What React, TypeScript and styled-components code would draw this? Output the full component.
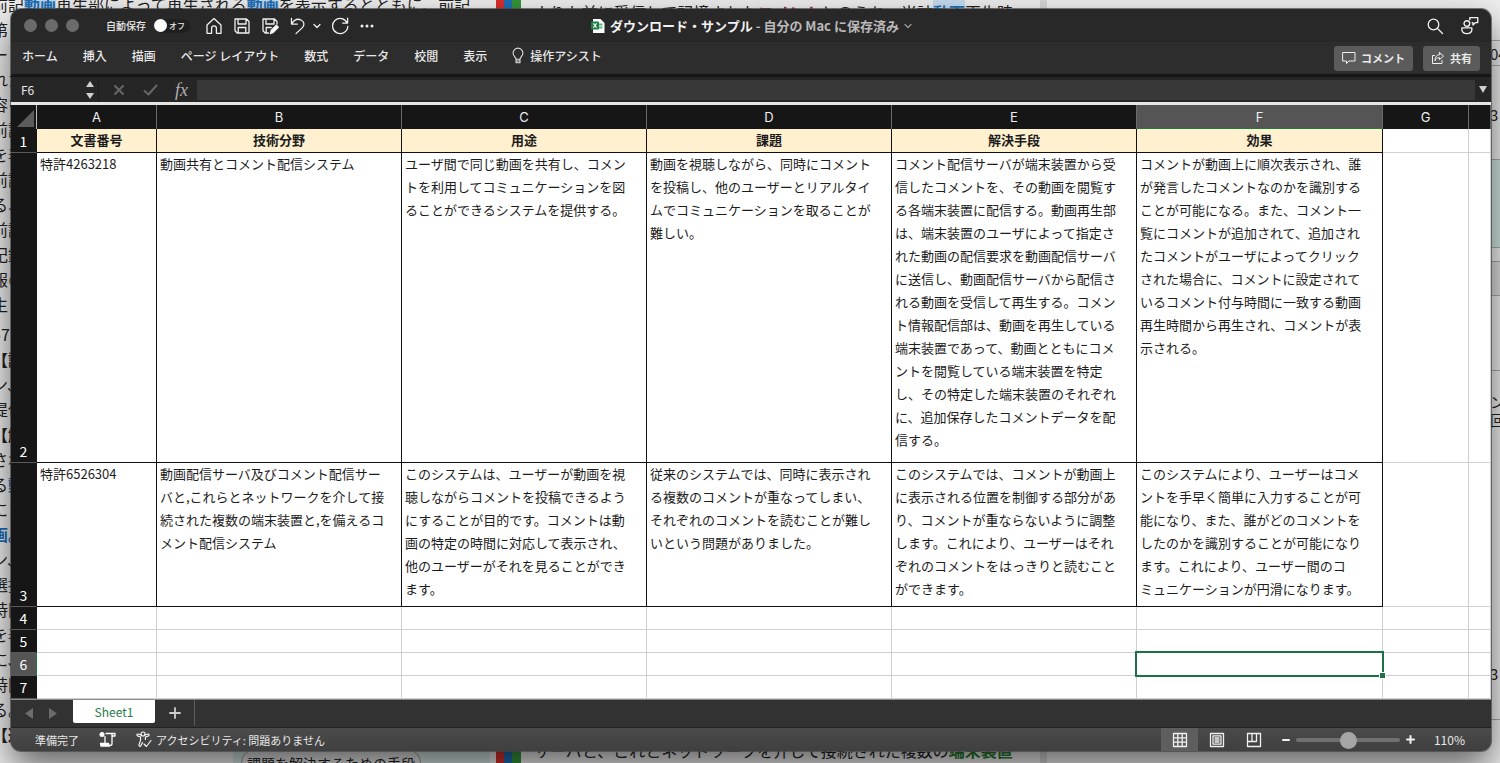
import React, { useState } from "react";
import styled, { createGlobalStyle, css } from "styled-components";

const GlobalStyle = createGlobalStyle`
  *, *::before, *::after { box-sizing: border-box; }
  body {
    margin: 0;
    background: #e9e9e9;
    font-family: "Noto Sans CJK JP", "Liberation Sans", sans-serif;
    font-size: 12px;
  }
  button, input { font: inherit; color: inherit; border: 0; padding: 0; margin: 0; background: none; }
  button { cursor: pointer; }
`;

/* ---------- desktop behind the window ---------- */

const Desktop = styled.div`
  position: relative;
  min-height: 100vh;
  padding: 9px 9px 12px 11px;
  overflow: hidden;
`;

const Backdrop = styled.div`
  position: absolute;
  inset: 0;
  display: grid;
  grid-template-columns: 496px 25px 519px 7px 1fr 10px;
  overflow: hidden;
  color: #222;
  font-size: 16px;
  line-height: 25px;
  white-space: nowrap;
`;

const Pane = styled.div`
  display: flex;
  flex-direction: column;
  justify-content: space-between;
  overflow: hidden;
  min-height: 0;
  background: #efefef;
`;

const DocLines = styled.div`
  margin: -8px 0 0 -8px;
`;

const DocLine = styled.div<{ $gap?: boolean; $bold?: boolean }>`
  height: 25px;
  margin-top: ${(p) => (p.$gap ? 5 : 0)}px;
  font-weight: ${(p) => (p.$bold ? 700 : 400)};
`;

const Mark = styled.span<{ $tone: string; $bg?: string }>`
  color: ${(p) => p.$tone};
  background: ${(p) => p.$bg ?? "transparent"};
  font-weight: 700;
`;

const Hint = styled.div`
  position: absolute;
  left: 233px;
  bottom: 0;
  width: 257px;
  height: 24px;
  padding: 10px 8px 0;
  background: #d3e6e2;
  overflow: hidden;
`;

const HintPill = styled.div`
  width: 180px;
  height: 28px;
  border: 1px solid #999;
  border-radius: 14px;
  background: #e4e4e4;
  text-align: center;
  font-size: 14px;
  line-height: 26px;
`;

const Stripes = styled.div`
  background: linear-gradient(90deg, #d9302c 0 8px, #1f6fb5 8px 16px, #35963c 16px);
`;

const CentreText = styled.p`
  margin: 0;
  padding: 0 0 0 13px;
`;

const Divider = styled.div`
  background: #d6d6d6;
`;

const Edge = styled.div`
  overflow: hidden;
  background: #efefef;
  font-size: 15px;
  line-height: 18px;
`;

const EdgeBlock = styled.div<{ $h: number; $bg?: string; $plain?: boolean }>`
  height: ${(p) => p.$h}px;
  padding-top: 4px;
  border-bottom: ${(p) => (p.$plain ? "0" : "1px solid #aaa")};
  background: ${(p) => p.$bg ?? "transparent"};
`;

/* ---------- window chrome ---------- */

const Window = styled.main`
  position: relative;
  border-radius: 10px;
  overflow: hidden;
  color: #e8e8e8;
  background: #2d2d2d;
`;

const WindowShadow = styled.div`
  position: relative;
  border-radius: 10px;
  box-shadow: 0 0 0 1px rgba(70, 70, 70, 0.7), 0 16px 36px rgba(0, 0, 0, 0.6);
`;

const TitleBar = styled.header`
  display: grid;
  grid-template-columns: 1fr auto 1fr;
  align-items: center;
  height: 33px;
  padding: 0 12px 0 13px;
  background: #282828;
`;

const TitleLeft = styled.div`
  display: flex;
  align-items: center;
`;

const Lights = styled.div`
  display: flex;
  gap: 8px;
  margin-right: 27px;
`;

const Light = styled.button`
  width: 13px;
  height: 13px;
  border-radius: 50%;
  background: #6b6b6b;
`;

const AutoSave = styled.label`
  display: flex;
  align-items: center;
  gap: 8px;
  width: 99px;
  font-size: 10px;
  font-weight: 500;
`;

const Switch = styled.span`
  position: relative;
  display: flex;
  align-items: center;
  width: 36px;
  height: 14px;
  padding-left: 15px;
  border-radius: 7px;
  background: #1f1f1f;
  font-size: 8px;
  line-height: 14px;
`;

const SwitchInput = styled.input`
  appearance: none;
  position: absolute;
  left: 0;
  top: 0;
  width: 13px;
  height: 13px;
  border-radius: 50%;
  background: #fff;
`;

const Tools = styled.div`
  display: flex;
  align-items: center;
  gap: 10px;
`;

const UndoGroup = styled.div`
  display: flex;
  align-items: center;
  gap: 6px;
`;

const IconButton = styled.button`
  display: inline-flex;
  align-items: center;
  justify-content: center;
  flex: none;
`;

const Title = styled.h1`
  display: flex;
  align-items: center;
  gap: 5px;
  margin: 0;
  font-size: 13px;
  line-height: 20px;
  font-weight: 700;
  color: #f2f2f2;
`;

const Saved = styled.span`
  color: #b9b9b9;
`;

const TitleRight = styled.div`
  display: flex;
  justify-content: flex-end;
  gap: 16px;
`;

const Ribbon = styled.nav`
  display: flex;
  align-items: center;
  height: 32px;
  padding: 0 11px 0 11px;
  background: #2d2d2d;
`;

const RibbonTabs = styled.div`
  display: flex;
  align-items: center;
  gap: 25px;
  flex: 1;
  padding-bottom: 4px;
`;

const RibbonTab = styled.button`
  display: inline-flex;
  align-items: center;
  gap: 6px;
  font-weight: 500;
  white-space: nowrap;
  line-height: 20px;
`;

const Action = styled.button`
  display: inline-flex;
  align-items: center;
  justify-content: center;
  gap: 5px;
  height: 25px;
  padding: 0 8px;
  margin-left: 10px;
  border-radius: 3px;
  background: #5b5b5b;
  font-size: 11px;
  font-weight: 700;
`;

const FormulaBar = styled.div`
  display: flex;
  align-items: center;
  height: 31px;
  border-top: 3px solid #161616;
  border-bottom: 3px solid #e6e6e6;
  background: #262626;
`;

const NameBox = styled.input`
  width: 70px;
  padding-left: 10px;
`;

const Spinner = styled.button`
  display: flex;
  width: 18px;
  height: 22px;
  align-items: center;
  justify-content: center;
  border-right: 1px solid #1c1c1c;
`;

const FormulaTools = styled.div`
  display: flex;
  align-items: center;
  justify-content: space-between;
  width: 98px;
  padding: 0 9px 0 14px;
`;

const Fx = styled.span`
  font: italic 18px/20px "Liberation Serif", serif;
  color: #b0b0b0;
`;

const FormulaInput = styled.input`
  flex: 1;
  min-width: 0;
  height: 20px;
  background: #383838;
`;

const Expand = styled(IconButton)`
  width: 16px;
`;

/* ---------- sheet ---------- */

const Sheet = styled.table`
  width: 100%;
  table-layout: fixed;
  border-collapse: separate;
  border-spacing: 0;
  background: #fff;
  color: #1c1c1c;
  font-size: 13px;
  line-height: 23px;
`;

const Col = styled.col<{ $w?: number }>`
  width: ${(p) => (p.$w ? `${p.$w}px` : "auto")};
`;

const HeadCell = styled.th<{ $active?: boolean }>`
  height: 24px;
  padding: 0;
  border-right: 1px solid #6a6a6a;
  background: #161616;
  color: #eee;
  font-family: "Inter", "Noto Sans CJK JP", sans-serif;
  font-weight: 400;
  line-height: 22px;
  ${(p) =>
    p.$active &&
    css`
      background: #555;
      box-shadow: inset 0 -1px #1d7a40;
    `}
`;

const Corner = styled.td`
  padding: 0 2px 2px 0;
  background: #161616;
  border-right: 1px solid #bbb;
  line-height: 0;
  text-align: right;
  vertical-align: bottom;
`;

const RowHead = styled.th<{ $active?: boolean }>`
  padding: 0;
  background: ${(p) => (p.$active ? "#555" : "#161616")};
  border-right: 1px solid ${(p) => (p.$active ? "#1d7a40" : "#161616")};
  border-bottom: 1px solid #5a5a5a;
  color: #fff;
  font-size: 14px;
  font-weight: 400;
  line-height: 22px;
  vertical-align: bottom;
`;

const Row = styled.tr<{ $h: number }>`
  height: ${(p) => p.$h}px;
`;

const Cell = styled.td<{ $kind: "title" | "data" | "empty" }>`
  position: relative;
  padding: 0 0 0 3px;
  vertical-align: top;
  white-space: pre;
  border-right: 1px solid #d0d0d0;
  border-bottom: 1px solid #d0d0d0;
  ${(p) =>
    p.$kind !== "empty" &&
    css`
      border-color: #111;
    `}
  ${(p) =>
    p.$kind === "title" &&
    css`
      padding: 0;
      background: #fff0cf;
      font-weight: 700;
      text-align: center;
    `}
`;

const CellText = styled.div`
  margin-top: -1px;
`;

const Selection = styled.div`
  position: absolute;
  inset: -2px;
  z-index: 1;
  border: 2px solid #1e7145;
  &::after {
    content: "";
    position: absolute;
    right: -4px;
    bottom: -4px;
    width: 7px;
    height: 7px;
    border: 1px solid #fff;
    background: #1e7145;
  }
`;

/* ---------- bottom bars ---------- */

const TabBar = styled.div`
  display: flex;
  align-items: flex-start;
  height: 29px;
  padding-left: 14px;
  border-top: 1px solid #8a8a8a;
  border-bottom: 1px solid #222;
  background: #323232;
`;

const TabArrows = styled.div`
  display: flex;
  gap: 16px;
  width: 48px;
  height: 27px;
  align-items: center;
`;

const SheetTab = styled.button`
  width: 82px;
  height: 23px;
  border-radius: 0 0 2px 2px;
  background: #fff;
  color: #1f7a4a;
  line-height: 23px;
`;

const AddTab = styled(IconButton)`
  width: 40px;
  height: 26px;
  border-right: 1px solid #5c5c5c;
`;

const StatusBar = styled.footer`
  display: flex;
  align-items: center;
  height: 23px;
  padding: 0 26px 0 24px;
  background: linear-gradient(#4b4b4b, #3f3f3f);
  font-size: 11px;
  line-height: 20px;
  white-space: nowrap;
`;

const StatusLeft = styled.div`
  display: flex;
  align-items: center;
  gap: 20px;
  flex: 1;
`;

const AccessButton = styled.button`
  display: inline-flex;
  align-items: center;
  gap: 4px;
`;

const ViewButton = styled(IconButton)<{ $on?: boolean }>`
  width: 37px;
  height: 23px;
  background: ${(p) => (p.$on ? "#5e5e5e" : "transparent")};
`;

const Zoom = styled.div`
  display: flex;
  align-items: center;
  gap: 6px;
  margin-left: 10px;
`;

const Slider = styled.input`
  appearance: none;
  width: 104px;
  height: 17px;
  &::-webkit-slider-runnable-track {
    height: 4px;
    border-radius: 2px;
    background: #707070;
  }
  &::-webkit-slider-thumb {
    appearance: none;
    width: 17px;
    height: 17px;
    margin-top: -6px;
    border-radius: 50%;
    background: #a5a5a5;
  }
`;

const Percent = styled.output`
  width: 44px;
  text-align: right;
  font-size: 12px;
`;

/* ---------- icons ---------- */

type IconProps = { w?: number; h?: number; box: string; color?: string; sw?: number; children: React.ReactNode };
const Icon = ({ w = 18, h = 18, box, color = "#f0f0f0", sw = 1.3, children }: IconProps) => (
  <svg width={w} height={h} viewBox={box} fill="none" stroke={color} strokeWidth={sw} strokeLinejoin="round" strokeLinecap="round" aria-hidden="true">
    {children}
  </svg>
);

const HomeIcon = () => (
  <Icon box="0 0 18 18">
    <path d="M2 8 9 1.6 16 8v8.3h-4.6v-5.1a2.4 2.4 0 0 0-4.8 0v5.1H2z" />
  </Icon>
);
const SaveIcon = () => (
  <Icon box="0 0 18 18">
    <path d="M2 2h11.5L16 4.5V16H4.2L2 13.8zM5 2v5h8V2M5.2 16v-5.5h7.6V16" />
  </Icon>
);
const SaveEditIcon = () => (
  <Icon box="0 0 18 18">
    <path d="M7.5 16H4.2L2 13.8V2h11.5L16 4.5V7M5 2v5h8V2M5.2 16v-5.5h5" />
    <path d="m9.3 16.6 1-3.3 5-5 2 2-5 5z" fill="#fff" />
  </Icon>
);
const UndoIcon = () => (
  <Icon box="0 0 18 18">
    <path d="M2.5 1.5v5.6h5.8M2.8 6.8C5 3.2 8.6 1.4 12 3c3.5 1.7 3.6 5.2 1.4 7.6L7 16.6" />
  </Icon>
);
const RedoIcon = () => (
  <Icon box="0 0 18 18">
    <path d="M16.6 1.2v4.9h-5M16.2 6A7.6 7.6 0 1 0 16.8 9.5" />
  </Icon>
);
const DownIcon = ({ color = "#eee" }: { color?: string }) => (
  <Icon w={8} h={6} box="0 0 8 6" color={color}>
    <path d="m1 1.5 3 3 3-3" />
  </Icon>
);
const MoreIcon = () => (
  <Icon w={16} box="0 0 16 18">
    <g fill="#f0f0f0" stroke="none">
      <circle cx="3" cy="9" r="1.5" />
      <circle cx="8" cy="9" r="1.5" />
      <circle cx="13" cy="9" r="1.5" />
    </g>
  </Icon>
);
const ExcelFile = () => (
  <svg width="14" height="16" viewBox="0 0 14 16" aria-hidden="true">
    <path d="M2 1h7.500L13.500 5v10H2z" fill="#fff" />
    <path d="M8 5.500h3.500v2H8zM8 8.500h3.500v2H8z" fill="#5ab67f" />
    <rect x="0" y="3.5" width="8" height="8" rx="0.8" fill="#1e7f48" />
    <path d="m2.4 5.4 3.2 4.2M5.6 5.4 2.4 9.6" stroke="#fff" strokeWidth="1.1" />
  </svg>
);
const SearchIcon = () => (
  <Icon box="0 0 18 18">
    <circle cx="7.5" cy="7.5" r="5.3" />
    <path d="m11.5 11.5 5 5" />
  </Icon>
);
const PersonIcon = () => (
  <Icon box="0 0 18 18" w={19} h={19}>
    <circle cx="6.5" cy="7.2" r="2.7" />
    <path d="M1.800 11.300h9.400v1.800c0 2.200-2 3.600-4.700 3.600s-4.700-1.400-4.700-3.600zM9.300 3.500v-2h7.500v4.800h-2.300l-2.200 2.200V6.300h-.8" />
  </Icon>
);
const BulbIcon = () => (
  <Icon w={12} h={18} box="0 0 12 18" sw={1.1} color="#ddd">
    <path d="M4 12.3c0-2-2.9-3-2.9-6.3a4.9 4.9 0 0 1 9.8 0c0 3.300-2.900 4.300-2.900 6.300zM4 12.300v3.500h4v-3.500M4 14h4" />
  </Icon>
);
const CommentIcon = () => (
  <Icon w={14} h={14} box="0 0 14 14" sw={1}>
    <path d="M1 1.500h12v8.500H6.800L4.500 12.600V10H1z" />
  </Icon>
);
const ShareIcon = () => (
  <Icon w={14} h={14} box="0 0 14 14" sw={1}>
    <path d="M3.500 4.500H1.500v8h9.500V9.500M8.500 1.500l4 3.600-4 3.600V6.700C6 6.600 4.700 7.800 4 9.800c0-3.700 1.600-6 4.500-6.200z" />
  </Icon>
);
const Triangle = ({ d, w, h, color }: { d: string; w: number; h: number; color: string }) => (
  <svg width={w} height={h} viewBox={`0 0 ${w} ${h}`} aria-hidden="true">
    <path d={d} fill={color} />
  </svg>
);
const MacroIcon = () => (
  <Icon w={17} h={17} box="0 0 17 17" color="#fff">
    <circle cx="3" cy="3.500" r="2.500" fill="#fff" stroke="none" />
    <path d="M7 2.500h9v2.500h-3M13 3v9.500a2 2 0 0 1-2 2M6 5.500v7" />
    <path d="M1.500 12.500h8l1 2.500H2z" fill="#fff" />
  </Icon>
);
const AccessIcon = () => (
  <Icon w={16} h={17} box="0 0 16 17" color="#fff" sw={1.1}>
    <circle cx="7" cy="3" r="2" />
    <path d="M5 4 2 3C.7 2.800.5 4.500 1.600 4.900L4.600 6v3.200L3 14c-.2 1.300 1.300 1.900 1.900.8L6.500 11.500M9 4l3-1c1.300-.2 1.500 1.500.4 1.900L9.400 6v2.500M8 13l2.400 2.500L15 9.500" />
  </Icon>
);
const GridIcon = () => (
  <Icon w={16} h={16} box="0 0 16 16" sw={1.3}>
    <path d="M1.500 1.500h13v13h-13zM1.500 5.800h13M1.500 10.200h13M5.800 1.500v13M10.200 1.500v13" />
  </Icon>
);
const PageIcon = () => (
  <Icon w={16} h={16} box="0 0 16 16" sw={1.3}>
    <path d="M1.500 1.500h13v13h-13zM4 3.800h8v8.400H4zM6 6h4M6 8h4M6 10h4" />
  </Icon>
);
const BreakIcon = () => (
  <Icon w={16} h={16} box="0 0 16 16" sw={1.3}>
    <path d="M1.500 1.500h13v13h-13zM1.500 9.500h9v-8M6 1.500V9" />
  </Icon>
);

/* ---------- data ---------- */

const letters = ["A", "B", "C", "D", "E", "F", "G"];
const widths = [26, 120, 245, 245, 245, 245, 246, 86];
const titles = ["文書番号", "技術分野", "用途", "課題", "解決手段", "効果"];

const records = [
  {
    height: 310,
    cells: [
      "特許4263218",
      "動画共有とコメント配信システム",
      "ユーザ間で同じ動画を共有し、コメン\nトを利用してコミュニケーションを図\nることができるシステムを提供する。",
      "動画を視聴しながら、同時にコメント\nを投稿し、他のユーザーとリアルタイ\nムでコミュニケーションを取ることが\n難しい。",
      "コメント配信サーバが端末装置から受\n信したコメントを、その動画を閲覧す\nる各端末装置に配信する。動画再生部\nは、端末装置のユーザによって指定さ\nれた動画の配信要求を動画配信サーバ\nに送信し、動画配信サーバから配信さ\nれる動画を受信して再生する。コメン\nト情報配信部は、動画を再生している\n端末装置であって、動画とともにコメ\nントを閲覧している端末装置を特定\nし、その特定した端末装置のそれぞれ\nに、追加保存したコメントデータを配\n信する。",
      "コメントが動画上に順次表示され、誰\nが発言したコメントなのかを識別する\nことが可能になる。また、コメント一\n覧にコメントが追加されて、追加され\nたコメントがユーザによってクリック\nされた場合に、コメントに設定されて\nいるコメント付与時間に一致する動画\n再生時間から再生され、コメントが表\n示される。",
    ],
  },
  {
    height: 144,
    cells: [
      "特許6526304",
      "動画配信サーバ及びコメント配信サー\nバと,これらとネットワークを介して接\n続された複数の端末装置と,を備えるコ\nメント配信システム",
      "このシステムは、ユーザーが動画を視\n聴しながらコメントを投稿できるよう\nにすることが目的です。コメントは動\n画の特定の時間に対応して表示され、\n他のユーザーがそれを見ることができ\nます。",
      "従来のシステムでは、同時に表示され\nる複数のコメントが重なってしまい、\nそれぞれのコメントを読むことが難し\nいという問題がありました。",
      "このシステムでは、コメントが動画上\nに表示される位置を制御する部分があ\nり、コメントが重ならないように調整\nします。これにより、ユーザーはそれ\nぞれのコメントをはっきりと読むこと\nができます。",
      "このシステムにより、ユーザーはコメ\nントを手早く簡単に入力することが可\n能になり、また、誰がどのコメントを\nしたのかを識別することが可能になり\nます。これにより、ユーザー間のコ\nミュニケーションが円滑になります。",
    ],
  },
];

const ribbonTabs = ["ホーム", "挿入", "描画", "ページ レイアウト", "数式", "データ", "校閲", "表示"];

const docLines = [
  "第", "ー", "れた", "容を", "前記", "を表", "前記", "る、", "前記", "記録", "報の", "生さ",
  "57", "【課", "ン、", "提供", "【解", "され", "る", "にコ", "画。", "ン、", "選択", "時間", "を表", "に、", "時間", "る。", "【選",
];

const blue = "#1d6fb8";

export default function App() {
  const [zoom, setZoom] = useState(51);
  return (
    <Desktop>
      <GlobalStyle />
      <Backdrop>
        <Pane>
          <DocLines>
            <DocLine>
              前記<Mark $tone={blue} $bg="#c6dcf0">動画</Mark>再生部によって再生される
              <Mark $tone={blue} $bg="#c6dcf0">動画</Mark>を表示するとともに、前記
            </DocLine>
            {docLines.map((t, i) => (
              <DocLine key={i} $gap={i === 12} $bold={t.startsWith("【")}>
                {t === "画。" ? <Mark $tone={blue}>{t}</Mark> : t}
                {t === "る" && <Mark $tone={blue}>動</Mark>}
              </DocLine>
            ))}
          </DocLines>
          <Hint>
            <HintPill>課題を解決するための手段</HintPill>
          </Hint>
        </Pane>
        <Stripes />
        <Pane>
          <CentreText>
            よりも前に受信して記憶された<Mark $tone="#b5202c">コメント</Mark>とのうち、当該
            <Mark $tone={blue} $bg="#c6dcf0">動画</Mark>再生時
          </CentreText>
          <CentreText>
            サーバと、これとネットワークを介して接続された複数の<Mark $tone="#2a7d2f">端末装置</Mark>
          </CentreText>
        </Pane>
        <Divider />
        <Pane />
        <Edge>
          <EdgeBlock $h={41} />
          <EdgeBlock $h={25}>04</EdgeBlock>
          <EdgeBlock $h={36} $plain />
          <EdgeBlock $h={58}>3</EdgeBlock>
          <EdgeBlock $h={88} $bg="#cfe6e2" />
          <EdgeBlock $h={14} />
          <EdgeBlock $h={34} $bg="#dedede" />
          <EdgeBlock $h={75} />
          <EdgeBlock $h={18} $plain />
          <EdgeBlock $h={272} $plain>ン、<br />回</EdgeBlock>
          <EdgeBlock $h={59}>3</EdgeBlock>
        </Edge>
      </Backdrop>

      <WindowShadow>
        <Window>
          <TitleBar>
            <TitleLeft>
              <Lights>
                <Light aria-label="閉じる" />
                <Light aria-label="最小化" />
                <Light aria-label="最大化" />
              </Lights>
              <AutoSave>
                自動保存
                <Switch>
                  <SwitchInput type="checkbox" />オフ
                </Switch>
              </AutoSave>
              <Tools>
                <IconButton aria-label="ホーム"><HomeIcon /></IconButton>
                <IconButton aria-label="保存"><SaveIcon /></IconButton>
                <IconButton aria-label="名前を付けて保存"><SaveEditIcon /></IconButton>
                <UndoGroup>
                  <IconButton aria-label="元に戻す"><UndoIcon /></IconButton>
                  <IconButton aria-label="履歴"><DownIcon /></IconButton>
                </UndoGroup>
                <IconButton aria-label="やり直し"><RedoIcon /></IconButton>
                <IconButton aria-label="その他"><MoreIcon /></IconButton>
              </Tools>
            </TitleLeft>
            <Title>
              <ExcelFile />
              <span>ダウンロード・サンプル <Saved>- 自分の Mac に保存済み</Saved></span>
              <DownIcon color="#999" />
            </Title>
            <TitleRight>
              <IconButton aria-label="検索"><SearchIcon /></IconButton>
              <IconButton aria-label="アカウント"><PersonIcon /></IconButton>
            </TitleRight>
          </TitleBar>

          <Ribbon>
            <RibbonTabs>
              {ribbonTabs.map((t) => (
                <RibbonTab key={t}>{t}</RibbonTab>
              ))}
              <RibbonTab><BulbIcon />操作アシスト</RibbonTab>
            </RibbonTabs>
            <Action><CommentIcon />コメント</Action>
            <Action><ShareIcon />共有</Action>
          </Ribbon>

          <FormulaBar>
            <NameBox aria-label="名前ボックス" defaultValue="F6" />
            <Spinner aria-label="セル選択">
              <Triangle w={8} h={18} d="M4 0l4 6H0zM4 18l4-6H0z" color="#d0d0d0" />
            </Spinner>
            <FormulaTools>
              <IconButton aria-label="キャンセル">
                <Icon w={12} h={12} box="0 0 12 12" color="#666" sw={2}><path d="m2 2 8 8M10 2l-8 8" /></Icon>
              </IconButton>
              <IconButton aria-label="入力">
                <Icon w={15} h={12} box="0 0 15 12" color="#666" sw={2}><path d="m1.500 7 4 3.500L13.500 1.500" /></Icon>
              </IconButton>
              <Fx>fx</Fx>
            </FormulaTools>
            <FormulaInput aria-label="数式" />
            <Expand aria-label="展開">
              <Triangle w={8} h={7} d="M0 0h8L4 7z" color="#d0d0d0" />
            </Expand>
          </FormulaBar>

          <Sheet>
            <colgroup>
              {widths.map((w, i) => (
                <Col key={i} $w={w} />
              ))}
              <Col />
            </colgroup>
            <thead>
              <tr>
                <Corner>
                  <Triangle w={17} h={17} d="M17 0v17H0z" color="#5c5c5c" />
                </Corner>
                {letters.map((l) => (
                  <HeadCell key={l} scope="col" $active={l === "F"}>{l}</HeadCell>
                ))}
                <HeadCell />
              </tr>
            </thead>
            <tbody>
              <Row $h={24}>
                <RowHead scope="row">1</RowHead>
                {titles.map((t) => (
                  <Cell key={t} $kind="title"><CellText>{t}</CellText></Cell>
                ))}
                <Cell $kind="empty" />
                <Cell $kind="empty" />
              </Row>
              {records.map((r, i) => (
                <Row key={i} $h={r.height}>
                  <RowHead scope="row">{i + 2}</RowHead>
                  {r.cells.map((c, j) => (
                    <Cell key={j} $kind="data"><CellText>{c}</CellText></Cell>
                  ))}
                  <Cell $kind="empty" />
                  <Cell $kind="empty" />
                </Row>
              ))}
              {[4, 5, 6, 7].map((n) => (
                <Row key={n} $h={23}>
                  <RowHead scope="row" $active={n === 6}>{n}</RowHead>
                  {letters.map((l) => (
                    <Cell key={l} $kind="empty">{n === 6 && l === "F" && <Selection />}</Cell>
                  ))}
                  <Cell $kind="empty" />
                </Row>
              ))}
            </tbody>
          </Sheet>

          <TabBar>
            <TabArrows>
              <IconButton aria-label="前のシート"><Triangle w={8} h={11} d="M8 0v11L0 5.500z" color="#6c6c6c" /></IconButton>
              <IconButton aria-label="次のシート"><Triangle w={8} h={11} d="M0 0v11l8-5.500z" color="#6c6c6c" /></IconButton>
            </TabArrows>
            <SheetTab>Sheet1</SheetTab>
            <AddTab aria-label="シートを追加">
              <Icon w={12} h={12} box="0 0 12 12" color="#ccc" sw={1.8}><path d="M6 1v10M1 6h10" /></Icon>
            </AddTab>
          </TabBar>

          <StatusBar>
            <StatusLeft>
              <span>準備完了</span>
              <IconButton aria-label="マクロの記録"><MacroIcon /></IconButton>
              <AccessButton><AccessIcon />アクセシビリティ: 問題ありません</AccessButton>
            </StatusLeft>
            <ViewButton $on aria-label="標準"><GridIcon /></ViewButton>
            <ViewButton aria-label="ページ レイアウト"><PageIcon /></ViewButton>
            <ViewButton aria-label="改ページ"><BreakIcon /></ViewButton>
            <Zoom>
              <IconButton aria-label="縮小">
                <Icon w={8} h={8} box="0 0 8 8" sw={2}><path d="M1 4h6" /></Icon>
              </IconButton>
              <Slider type="range" aria-label="ズーム" min={0} max={100} value={zoom} onChange={(e) => setZoom(Number(e.target.value))} />
              <IconButton aria-label="拡大">
                <Icon w={9} h={9} box="0 0 9 9" sw={2}><path d="M1 4.500h7M4.500 1v7" /></Icon>
              </IconButton>
              <Percent>{zoom + 59}%</Percent>
            </Zoom>
          </StatusBar>
        </Window>
      </WindowShadow>
    </Desktop>
  );
}
